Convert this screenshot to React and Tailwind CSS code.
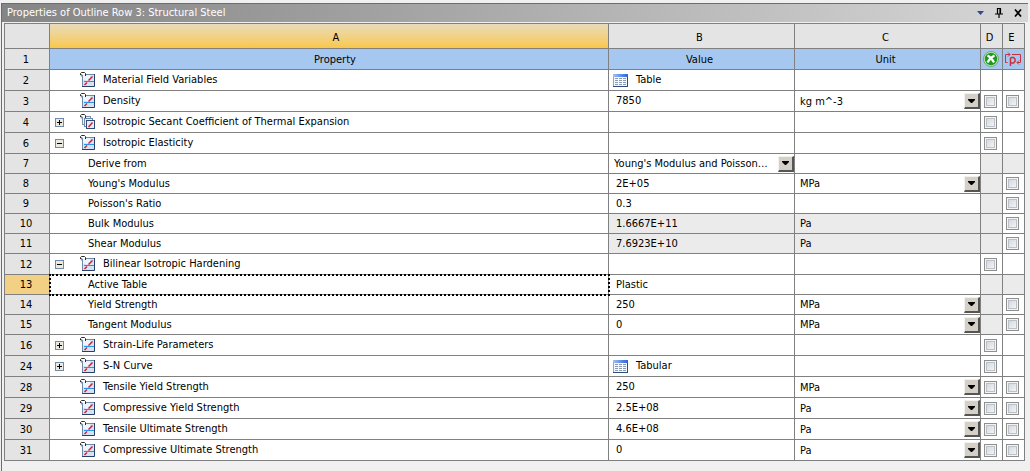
import React from 'react';

const rows = [
  { n: 2, name: 'Material Field Variables', icon: 'chart', value: 'Table', table: true, d: 'none', e: 'none' },
  { n: 3, name: 'Density', icon: 'chart', value: '7850', unit: 'kg m^-3', pick: true, d: 'box', e: 'box' },
  { n: 4, name: 'Isotropic Secant Coefficient of Thermal Expansion', icon: 'stack', toggle: 'plus', d: 'box', e: 'none' },
  { n: 6, name: 'Isotropic Elasticity', icon: 'chart', toggle: 'minus', d: 'box', e: 'none' },
  { n: 7, name: 'Derive from', child: true, derive: true, d: 'gray', e: 'gray' },
  { n: 8, name: "Young's Modulus", child: true, value: '2E+05', unit: 'MPa', pick: true, d: 'gray', e: 'box' },
  { n: 9, name: "Poisson's Ratio", child: true, value: '0.3', d: 'gray', e: 'box' },
  { n: 10, name: 'Bulk Modulus', child: true, value: '1.6667E+11', unit: 'Pa', readOnly: true, d: 'gray', e: 'box' },
  { n: 11, name: 'Shear Modulus', child: true, value: '7.6923E+10', unit: 'Pa', readOnly: true, d: 'gray', e: 'box' },
  { n: 12, name: 'Bilinear Isotropic Hardening', icon: 'chart', toggle: 'minus', d: 'box', e: 'none' },
  { n: 13, name: 'Active Table', child: true, value: 'Plastic', selected: true, d: 'gray', e: 'gray' },
  { n: 14, name: 'Yield Strength', child: true, value: '250', unit: 'MPa', pick: true, d: 'gray', e: 'box' },
  { n: 15, name: 'Tangent Modulus', child: true, value: '0', unit: 'MPa', pick: true, d: 'gray', e: 'box' },
  { n: 16, name: 'Strain-Life Parameters', icon: 'chart', toggle: 'plus', d: 'box', e: 'none' },
  { n: 24, name: 'S-N Curve', icon: 'chart', toggle: 'plus', value: 'Tabular', table: true, d: 'box', e: 'none' },
  { n: 28, name: 'Tensile Yield Strength', icon: 'chart', value: '250', unit: 'MPa', pick: true, d: 'box', e: 'box' },
  { n: 29, name: 'Compressive Yield Strength', icon: 'chart', value: '2.5E+08', unit: 'Pa', pick: true, d: 'box', e: 'box' },
  { n: 30, name: 'Tensile Ultimate Strength', icon: 'chart', value: '4.6E+08', unit: 'Pa', pick: true, d: 'box', e: 'box' },
  { n: 31, name: 'Compressive Ultimate Strength', icon: 'chart', value: '0', unit: 'Pa', pick: true, d: 'box', e: 'box' },
];

const cell = 'border-r border-b border-[#808080] p-0 font-normal';

function Hook() {
  return (
    <g fill="none">
      <path d="M0 0h5v3H0z" fill="#fff" />
      <path d="M1.500 4.500V2" stroke="#8b8f94" strokeWidth="1.500" />
      <path d="M.5 3V1.500L1.500.5h3l1 1V4" stroke="#2a2a2a" />
    </g>
  );
}

function ChartIcon() {
  return (
    <svg width="16" height="16" viewBox="0 0 16 16" className="shrink-0" aria-hidden="true">
      <path d="M2 2h13v13H2z" fill="#d4e2f4" />
      <path d="M3 3h7v5H3z" fill="#eef4fc" />
      <path d="M2.500 15V2.500H15" fill="none" stroke="#6f89ad" />
      <path d="M2 14.500h12.500V2" fill="none" stroke="#27406b" />
      <path d="M4 9.500h10" stroke="#2a93ee" />
      <path d="M4.500 13L7 10.500M8.500 8.500L12.500 4.500" stroke="#d4202c" strokeWidth="1.500" fill="none" />
      <Hook />
    </svg>
  );
}

function StackIcon() {
  return (
    <svg width="16" height="16" viewBox="0 0 16 16" className="shrink-0" aria-hidden="true">
      <rect x="2.500" y="2.500" width="8" height="8" fill="#edf2fa" stroke="#7d92b2" />
      <rect x="4.500" y="4.500" width="8" height="8" fill="#edf2fa" stroke="#7088ab" />
      <rect x="6.500" y="6.500" width="8" height="8" fill="#e6eef9" stroke="#2e4a78" />
      <path d="M8.500 13l4-4.500" stroke="#d4202c" strokeWidth="1.500" fill="none" />
      <Hook />
    </svg>
  );
}

function TableIcon() {
  return (
    <svg width="15" height="13" viewBox="0 0 15 13" className="shrink-0" aria-hidden="true">
      <defs>
        <linearGradient id="tableHead" x2="1">
          <stop stopColor="#9fc0fa" />
          <stop offset="1" stopColor="#2b62d9" />
        </linearGradient>
      </defs>
      <rect x=".5" y=".5" width="14" height="12" fill="#f4f7fc" stroke="#8fa6cc" />
      <rect width="15" height="3" fill="url(#tableHead)" />
      <path d="M2 4.500h11M2 6.500h11M2 8.500h11M2 10.500h11" stroke="#8a9bb6" strokeDasharray="3 1" />
      <path d="M14.500 3v10M0 12.500h15" stroke="#2f4a7c" />
    </svg>
  );
}

function Toggle({ kind, name }) {
  return (
    <button type="button" aria-label={(kind === 'plus' ? 'Expand ' : 'Collapse ') + name} className="block size-[9px]">
      <svg width="9" height="9" viewBox="0 0 9 9" className="block">
        <rect x=".5" y=".5" width="8" height="8" fill="#ece9e2" stroke="#6f8ba6" />
        <path d={kind === 'plus' ? 'M2 4.500h5M4.500 2v5' : 'M2 4.500h5'} stroke="#000" />
      </svg>
    </button>
  );
}

function Picker({ label, options, pad }) {
  return (
    <div className="grid h-full grid-cols-1 items-center">
      <select
        aria-label={label}
        className={'col-start-1 row-start-1 h-full w-full min-w-0 appearance-none truncate bg-transparent pt-px pr-6 outline-none ' + pad}
      >
        {options.map((o) => (
          <option key={o}>{o}</option>
        ))}
      </select>
      <span className="pointer-events-none col-start-1 row-start-1 flex size-4 items-center justify-center justify-self-end border-t border-r-2 border-b-2 border-l border-t-[#f4f2ee] border-r-[#555] border-b-[#555] border-l-[#f4f2ee] bg-[#d4d0c8]">
        <svg width="7" height="4" viewBox="0 0 7 4" aria-hidden="true">
          <path d="M0 0h7v1L4 4H3L0 1z" fill="#000" />
        </svg>
      </span>
    </div>
  );
}

function FlagCell({ kind, label }) {
  return (
    <td className={cell + (kind === 'gray' ? ' bg-[#ebebeb]' : '')}>
      {kind === 'box' && (
        <input
          type="checkbox"
          aria-label={label}
          className="ml-[3px] block size-[13px] appearance-none border border-[#8e8f8f] bg-linear-to-br from-[#cdd2d9] to-[#fbfbfb] shadow-[inset_0_0_0_1px_#f4f4f4,inset_0_0_0_2px_#bcc1c8]"
        />
      )}
    </td>
  );
}

function Row({ r }) {
  const shade = r.readOnly ? ' bg-[#ebebeb]' : '';
  return (
    <tr className={r.child ? 'h-5' : 'h-[21px]'}>
      <th scope="row" className={cell + ' text-center ' + (r.selected ? 'bg-[#f2d185]' : 'bg-[#e4e4e4]')}>
        <span className="block pt-px pr-0.5">{r.n}</span>
      </th>
      <td className={cell + (r.selected ? ' outline-2 -outline-offset-1 outline-dotted outline-black' : '')}>
        {r.child ? (
          <span className="pl-[38px]">{r.name}</span>
        ) : (
          <div className="flex items-center pl-[5px]">
            <span className="w-[25px] shrink-0">{r.toggle && <Toggle kind={r.toggle} name={r.name} />}</span>
            {r.icon === 'stack' ? <StackIcon /> : <ChartIcon />}
            <span className="pl-[7px]">{r.name}</span>
          </div>
        )}
      </td>
      <td className={cell + shade}>
        {r.derive ? (
          <Picker label={r.name} pad="pl-[5px]" options={["Young's Modulus and Poisson's Ratio", "Bulk Modulus and Poisson's Ratio"]} />
        ) : r.table ? (
          <div className="flex items-center gap-2 pl-1">
            <TableIcon />
            {r.value}
          </div>
        ) : (
          <span className="pl-[7px]">{r.value}</span>
        )}
      </td>
      <td className={cell + shade}>
        {r.pick ? (
          <Picker label={r.name + ' unit'} pad="pl-[5px]" options={[r.unit]} />
        ) : (
          <span className="block pt-px pl-[5px]">{r.unit}</span>
        )}
      </td>
      <FlagCell kind={r.d} label={'Suppress ' + r.name} />
      <FlagCell kind={r.e} label={'Parameterize ' + r.name} />
    </tr>
  );
}

export default function App() {
  return (
    <div className="min-h-screen bg-[#f0f0f0] pt-[3px] pr-0.5 pl-px font-['DejaVu_Sans_Condensed','DejaVu_Sans',sans-serif] text-[11px] leading-4 text-black">
      <section className="flex min-h-[468px] flex-col border-t border-l border-[#6d6d6d]">
        <header className="flex h-[18px] items-center bg-linear-to-r from-[#858585] to-[#d6d6d6] pr-1.5 pl-[5px] text-white">
          <h1 className="flex-1 text-[11px]">Properties of Outline Row 3: Structural Steel</h1>
          <div className="flex items-center gap-[11px]">
            <button type="button" aria-label="Window menu">
              <svg width="7" height="4" viewBox="0 0 7 4"><path d="M0 0h7L3.500 4z" fill="#33478c" /></svg>
            </button>
            <button type="button" aria-label="Pin">
              <svg width="8" height="10" viewBox="0 0 8 10"><path d="M2.500 5.500v-5h3v5M5 1v5M0 6h8M4 6v4" fill="none" stroke="#000" strokeWidth="1.200" /></svg>
            </button>
            <button type="button" aria-label="Close">
              <svg width="8" height="8" viewBox="0 0 8 8"><path d="M1 .5l6 7M7 .5l-6 7" stroke="#000" strokeWidth="1.700" /></svg>
            </button>
          </div>
        </header>
        <div className="border-t border-[#f0f0f0] pr-[3px] pl-0.5">
          <table className="w-full table-fixed border-separate border-spacing-0 border-t border-l border-[#808080] bg-white text-left">
            <colgroup>
              <col className="w-[45px]" />
              <col />
              <col className="w-[186px]" />
              <col className="w-[186px]" />
              <col className="w-[22px]" />
              <col className="w-[22px]" />
            </colgroup>
            <thead className="text-center">
              <tr className="h-[25px] bg-[#e4e4e4]">
                <td className={cell} />
                <th scope="col" className={cell + ' bg-linear-to-b from-[#e8dbb8] to-[#f9c846]'}><span className="block pt-1 pl-3.5">A</span></th>
                <th scope="col" className={cell}><span className="block pt-1 pr-1">B</span></th>
                <th scope="col" className={cell}><span className="block pt-1 pr-1">C</span></th>
                <th scope="col" className={cell}><span className="block pt-1 pr-1">D</span></th>
                <th scope="col" className={cell}><span className="block pt-1 pr-1">E</span></th>
              </tr>
              <tr className="h-[21px] bg-[#a6c8f0]">
                <th scope="row" className={cell + ' bg-[#e4e4e4]'}><span className="block pt-0.5 pr-0.5">1</span></th>
                <th scope="col" className={cell}><span className="block pt-px pl-3">Property</span></th>
                <th scope="col" className={cell}><span className="block pt-px pr-1">Value</span></th>
                <th scope="col" className={cell}><span className="block pt-px pr-1">Unit</span></th>
                <th scope="col" className={cell} aria-label="Suppress">
                  <svg width="16" height="16" viewBox="0 0 16 16" className="ml-0.5 block">
                    <circle cx="8" cy="8" r="7.500" fill="#cfe3cb" stroke="#5d9d5d" strokeWidth=".8" />
                    <circle cx="8" cy="8" r="6.200" fill="#1d9a1d" />
                    <path d="M4.500 4.500c3 1.500 5 4 6.500 7M11.500 4.500c-3 1.500-5.500 4-7 7" fill="none" stroke="#fff" strokeWidth="2.100" />
                  </svg>
                </th>
                <th scope="col" className={cell} aria-label="Parameterize">
                  <svg width="16" height="15" viewBox="0 0 16 15" className="ml-0.5 block" fill="none" stroke="#c8323c">
                    <path d="M2.500 10.500H.5v-8H5M3 .5l2 2-2 2M7 2.500h8.500v8H12M14 8.500l-2 2 2 2" />
                    <path d="M5.500 14V5.500M5.500 6.500l1-1h2l1.500 1.500v2.500L8.500 11h-3" strokeWidth="1.500" />
                  </svg>
                </th>
              </tr>
            </thead>
            <tbody>
              {rows.map((r) => (
                <Row key={r.n} r={r} />
              ))}
            </tbody>
          </table>
        </div>
      </section>
    </div>
  );
}
